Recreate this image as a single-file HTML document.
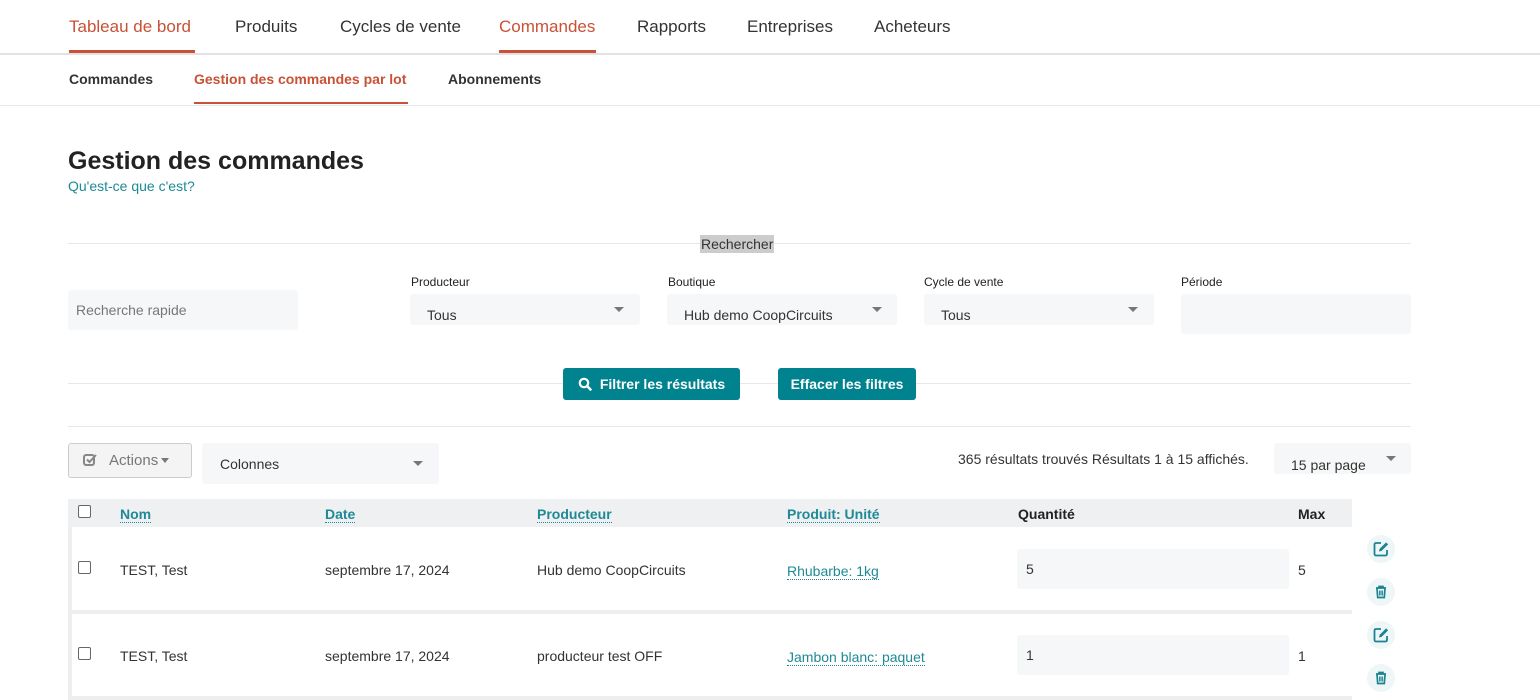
<!DOCTYPE html>
<html><head><meta charset="utf-8"><style>
*{box-sizing:border-box;margin:0;padding:0}
body{width:1540px;height:700px;overflow:hidden;background:#fff;font-family:"Liberation Sans",sans-serif;color:#222;position:relative}
.a{position:absolute;white-space:nowrap}
.nav{font-size:17px;top:17px;color:#333}
.ul{position:absolute;height:3px;background:#c85136}
.sub{font-size:14px;font-weight:bold;top:71px;color:#333}
.red{color:#c85136}
.hl{position:absolute;height:1px;background:#e8e8e8}
.lbl{font-size:12px;top:275px;color:#222}
.box{position:absolute;background:#f6f7f8;border-radius:3px;font-size:14px;color:#333}
.car{position:absolute;width:0;height:0;border-left:5px solid transparent;border-right:5px solid transparent;border-top:5px solid #777}
.btn{position:absolute;background:#00838f;color:#fff;font-weight:bold;font-size:14px;border-radius:3px;text-align:center;line-height:32px}
.th{position:absolute;top:506px;font-size:14px;font-weight:bold;color:#1e8a96;border-bottom:1px dotted #1e8a96;line-height:16px}
.td{position:absolute;font-size:14px;color:#333}
.lk{color:#1e8a96;border-bottom:1px dotted #1e8a96;line-height:16px}
.cb{position:absolute;width:13px;height:13px;border:1px solid #666;border-radius:2px;background:#fff}
.ic{position:absolute;width:28px;height:28px;border-radius:50%;background:#eef6f7;left:1367px}
</style></head><body>
<div class="a nav red" style="left:69px">Tableau de bord</div>
<div class="ul" style="left:69px;top:50px;width:126px"></div>
<div class="a nav" style="left:235px">Produits</div>
<div class="a nav" style="left:340px">Cycles de vente</div>
<div class="a nav red" style="left:499px">Commandes</div>
<div class="ul" style="left:499px;top:50px;width:97px"></div>
<div class="a nav" style="left:637px">Rapports</div>
<div class="a nav" style="left:747px">Entreprises</div>
<div class="a nav" style="left:874px">Acheteurs</div>
<div class="hl" style="left:0;top:53px;width:1540px;background:#e2e2e2;height:2px"></div>

<div class="a sub" style="left:69px">Commandes</div>
<div class="a sub red" style="left:194px">Gestion des commandes par lot</div>
<div class="ul" style="left:194px;top:102px;width:214px;height:2px"></div>
<div class="a sub" style="left:448px">Abonnements</div>
<div class="hl" style="left:0;top:105px;width:1540px"></div>

<div class="a" style="left:68px;top:147px;font-size:25px;font-weight:bold;color:#222">Gestion des commandes</div>
<div class="a" style="left:68px;top:178px;font-size:14px;color:#1e8a96">Qu'est-ce que c'est?</div>

<div class="hl" style="left:68px;top:243px;width:1343px"></div>
<div class="a" style="left:700px;top:235px;font-size:14px;background:#ccc;color:#333;padding:0 1px;line-height:18px">Rechercher</div>

<div class="box" style="left:68px;top:290px;width:230px;height:40px;padding:12px 8px;color:#777">Recherche rapide</div>
<div class="a lbl" style="left:411px">Producteur</div>
<div class="box" style="left:410px;top:294px;width:230px;height:31px;padding:13px 17px 0">Tous</div><div class="car" style="left:614px;top:307px"></div>
<div class="a lbl" style="left:668px">Boutique</div>
<div class="box" style="left:667px;top:294px;width:230px;height:31px;padding:13px 17px 0">Hub demo CoopCircuits</div><div class="car" style="left:872px;top:307px"></div>
<div class="a lbl" style="left:924px">Cycle de vente</div>
<div class="box" style="left:924px;top:294px;width:230px;height:31px;padding:13px 17px 0">Tous</div><div class="car" style="left:1128px;top:307px"></div>
<div class="a lbl" style="left:1181px">Période</div>
<div class="box" style="left:1181px;top:294px;width:230px;height:40px"></div>

<div class="hl" style="left:68px;top:383px;width:1343px"></div>
<div class="btn" style="left:563px;top:368px;width:177px;height:32px"><svg width="14" height="14" viewBox="0 0 14 14" style="vertical-align:-2px;margin-right:8px"><circle cx="6" cy="6" r="4.2" fill="none" stroke="#fff" stroke-width="2.2"/><path d="M9 9l3.5 3.5" stroke="#fff" stroke-width="2.5" stroke-linecap="round"/></svg>Filtrer les résultats</div>
<div class="btn" style="left:778px;top:368px;width:138px;height:32px">Effacer les filtres</div>
<div class="hl" style="left:68px;top:426px;width:1343px"></div>

<div class="a" style="left:68px;top:443px;width:124px;height:35px;border:1px solid #ccc;border-radius:3px;background:#f4f4f4;font-size:15px;color:#777;padding:8px 0 0 14px"><svg width="14" height="13" viewBox="0 0 14 13" style="vertical-align:-1px;margin-right:12px"><rect x="1" y="2" width="10" height="10" rx="2" fill="none" stroke="#888" stroke-width="2"/><path d="M4 6.5l2.5 2.5L13 2" fill="none" stroke="#888" stroke-width="2"/></svg>Actions<span style="display:inline-block;border-left:4px solid transparent;border-right:4px solid transparent;border-top:5px solid #777;margin-left:3px;vertical-align:2px"></span></div>
<div class="box" style="left:202px;top:443px;width:237px;height:41px;padding:13px 18px 0">Colonnes</div><div class="car" style="left:413px;top:461px"></div>

<div class="a" style="left:958px;top:451px;font-size:14px;color:#333">365 résultats trouvés Résultats 1 à 15 affichés.</div>
<div class="box" style="left:1274px;top:443px;width:137px;height:31px;padding:14px 17px 0">15 par page</div><div class="car" style="left:1386px;top:456px"></div>

<div class="a" style="left:68px;top:499px;width:1284px;height:28px;background:#eff0f2"></div>
<div class="a" style="left:68px;top:527px;width:4px;height:173px;background:#eeeeee"></div>
<div class="a" style="left:68px;top:610px;width:1284px;height:4px;background:#eeeeee"></div>
<div class="a" style="left:68px;top:696px;width:1284px;height:4px;background:#eeeeee"></div>

<div class="cb" style="left:78px;top:505px"></div>
<div class="th" style="left:120px">Nom</div>
<div class="th" style="left:325px">Date</div>
<div class="th" style="left:537px">Producteur</div>
<div class="th" style="left:787px">Produit: Unité</div>
<div class="a" style="left:1018px;top:506px;font-size:14px;font-weight:bold;color:#222">Quantité</div>
<div class="a" style="left:1298px;top:506px;font-size:14px;font-weight:bold;color:#222">Max</div>

<div class="cb" style="left:78px;top:561px"></div>
<div class="td" style="left:120px;top:562px">TEST, Test</div>
<div class="td" style="left:325px;top:562px">septembre 17, 2024</div>
<div class="td" style="left:537px;top:562px">Hub demo CoopCircuits</div>
<div class="td lk" style="left:787px;top:563px">Rhubarbe: 1kg</div>
<div class="box" style="left:1017px;top:549px;width:272px;height:40px;padding:12px 9px">5</div>
<div class="td" style="left:1298px;top:562px">5</div>

<div class="cb" style="left:78px;top:647px"></div>
<div class="td" style="left:120px;top:648px">TEST, Test</div>
<div class="td" style="left:325px;top:648px">septembre 17, 2024</div>
<div class="td" style="left:537px;top:648px">producteur test OFF</div>
<div class="td lk" style="left:787px;top:649px">Jambon blanc: paquet</div>
<div class="box" style="left:1017px;top:635px;width:272px;height:40px;padding:12px 9px">1</div>
<div class="td" style="left:1298px;top:648px">1</div>

<div class="ic" style="top:535px"><svg width="28" height="28" viewBox="0 0 28 28"><path d="M14 8H9a1.5 1.5 0 0 0-1.5 1.5v9.5A1.5 1.5 0 0 0 9 20.5h9.5A1.5 1.5 0 0 0 20 19v-4" fill="none" stroke="#1a8391" stroke-width="1.8"/><path d="M12 16.5l.6-2.6 6.5-6.5 2 2-6.5 6.5z" fill="#1a8391"/></svg></div>
<div class="ic" style="top:578px"><svg width="28" height="28" viewBox="0 0 28 28"><path d="M9 10h10M12 10V8.5h4V10M10 10.5l.7 9h6.6l.7-9" fill="none" stroke="#1a8391" stroke-width="1.7"/><path d="M12.6 12.5v5M14 12.5v5M15.4 12.5v5" stroke="#1a8391" stroke-width="1"/></svg></div>
<div class="ic" style="top:621px"><svg width="28" height="28" viewBox="0 0 28 28"><path d="M14 8H9a1.5 1.5 0 0 0-1.5 1.5v9.5A1.5 1.5 0 0 0 9 20.5h9.5A1.5 1.5 0 0 0 20 19v-4" fill="none" stroke="#1a8391" stroke-width="1.8"/><path d="M12 16.5l.6-2.6 6.5-6.5 2 2-6.5 6.5z" fill="#1a8391"/></svg></div>
<div class="ic" style="top:664px"><svg width="28" height="28" viewBox="0 0 28 28"><path d="M9 10h10M12 10V8.5h4V10M10 10.5l.7 9h6.6l.7-9" fill="none" stroke="#1a8391" stroke-width="1.7"/><path d="M12.6 12.5v5M14 12.5v5M15.4 12.5v5" stroke="#1a8391" stroke-width="1"/></svg></div>
</body></html>
